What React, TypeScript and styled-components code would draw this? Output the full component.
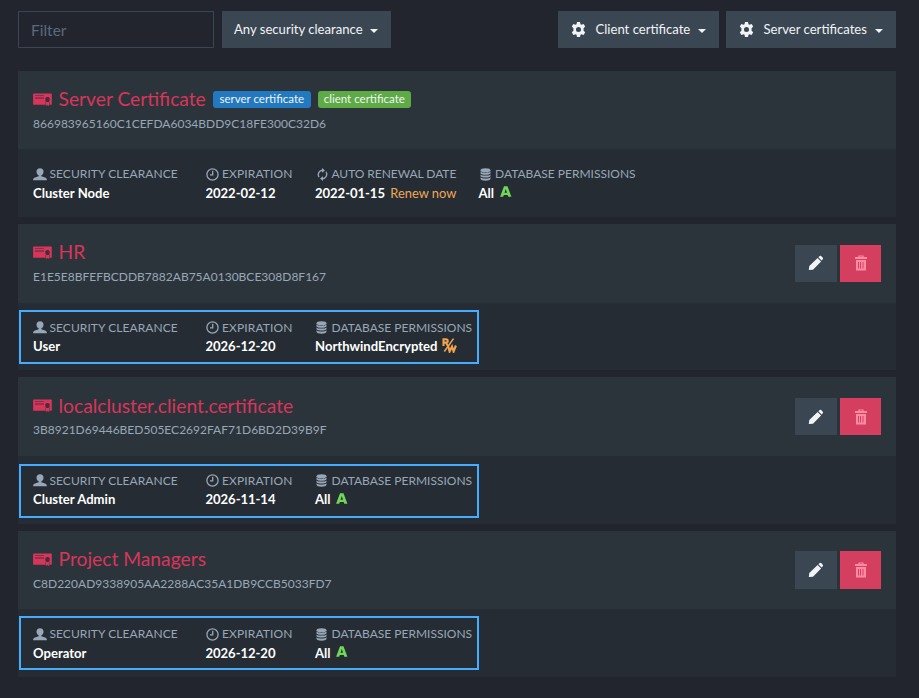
import React from "react";
import styled, { createGlobalStyle } from "styled-components";

const GlobalStyle = createGlobalStyle`
  *, *::before, *::after { box-sizing: border-box; }
  body {
    margin: 0;
    background: #22252d;
    color: #f0f4f6;
    font-family: Lato, "Open Sans", sans-serif;
    font-size: 13px;
  }
`;

const Page = styled.main`
  width: 919px;
  height: 698px;
  padding: 11px 23px 0 18px;
  overflow: hidden;
`;

const Toolbar = styled.div`
  display: flex;
  height: 37px;
  margin-bottom: 22.9px;
`;

const FilterInput = styled.input`
  width: 196px;
  height: 37px;
  margin-right: 8px;
  padding: 0 12px;
  border: 1px solid #3b4653;
  border-radius: 0;
  background: transparent;
  outline: none;
  color: #f0f4f6;
  font: 15.5px Lato, sans-serif;
  &::placeholder { color: #5d6980; opacity: 1; }
`;

const DropButton = styled.button<{ $width: number; $push?: boolean }>`
  display: flex;
  align-items: center;
  width: ${(p) => p.$width}px;
  height: 37px;
  margin-left: ${(p) => (p.$push ? "auto" : "0")};
  padding: 0 12px;
  border: 0;
  background: #3b4653;
  color: #f0f4f6;
  font: 13.1px Lato, sans-serif;
  white-space: nowrap;
  & + & { margin-right: 7px; }
  &:last-child { margin-right: 0; }
  svg { margin: 0 9.5px 0 1px; }
`;

const ButtonText = styled.span`
  margin-top: -2px;
`;

const Caret = styled.span`
  margin: 2px 1px 0 auto;
  border: 4px solid transparent;
  border-top-color: #f0f4f6;
  border-bottom: 0;
`;

const Card = styled.section`
  position: relative;
  height: 146.25px;
  margin-bottom: 7px;
  background: #252c33;
`;

const CardHeader = styled.header`
  display: flex;
  justify-content: space-between;
  height: 78.4px;
  padding: 15px 15px 0;
  background: #2c343b;
`;

const TitleRow = styled.div`
  display: flex;
  align-items: center;
  height: 26px;
  color: #d9345a;
  > svg { margin-top: 0.8px; }
`;

const Title = styled.h3`
  margin: 0.4px 7px 0 6.5px;
  font-size: 19.25px;
  font-weight: 400;
  line-height: 26px;
`;

const Badge = styled.span<{ $color: string; $width: number }>`
  width: ${(p) => p.$width}px;
  height: 17px;
  margin: 1px 7px 0 0;
  border-radius: 3px;
  background: ${(p) => p.$color};
  color: #f0f4f6;
  font-size: 11.5px;
  line-height: 16px;
  text-align: center;
  white-space: nowrap;
`;

const Thumbprint = styled.div`
  margin-top: 2.9px;
  color: #98a7b7;
  font-size: 12px;
  line-height: 18px;
  letter-spacing: 0.01px;
`;

const Actions = styled.div`
  display: flex;
  gap: 3px;
  margin-top: 5.7px;
`;

const ActionButton = styled.button<{ $danger?: boolean }>`
  display: flex;
  align-items: center;
  justify-content: center;
  width: ${(p) => (p.$danger ? 41 : 42)}px;
  height: 37.3px;
  padding: 0;
  border: ${(p) => (p.$danger ? "1px solid #dc3c60" : "0")};
  background: ${(p) => (p.$danger ? "#d43f5f" : "#3b4653")};
  color: ${(p) => (p.$danger ? "#ff8ba3" : "#f0f4f6")};
`;

const Details = styled.div`
  display: flex;
  padding: 16px 15px 0;
`;

const Property = styled.div<{ $width: number }>`
  flex: none;
  width: ${(p) => p.$width}px;
`;

const Label = styled.div<{ $spacing?: number }>`
  display: flex;
  align-items: center;
  height: 18px;
  color: #98a7b7;
  font-size: 12px;
  line-height: 18px;
  letter-spacing: ${(p) => p.$spacing ?? 0.06}px;
  white-space: nowrap;
`;

const IconSlot = styled.span`
  display: flex;
  flex: none;
  align-items: center;
  justify-content: center;
  width: 14px;
  height: 14px;
  margin-right: 2.5px;
`;

const Value = styled.div`
  display: flex;
  align-items: center;
  height: 20px;
  color: #ffffff;
  font-size: 13.1px;
  font-weight: 700;
  line-height: 19px;
  white-space: nowrap;
`;

const DateText = styled.span`
  letter-spacing: -0.06px;
`;

const Renew = styled.a`
  margin-left: 5.3px;
  color: #f0a858;
  font-size: 12.9px;
  font-weight: 400;
`;

const Highlight = styled.div<{ $top: number }>`
  position: absolute;
  top: ${(p) => p.$top}px;
  left: 1px;
  width: 460px;
  height: 54px;
  border: 2px solid #45adff;
  pointer-events: none;
`;

const AccessIcon = styled.svg<{ $gap: number }>`
  margin: -3px 0 0 ${(p) => p.$gap}px;
`;

const GearIcon = () => (
  <svg width="15" height="15" viewBox="0 0 16 16" fill="currentColor">
    <path fillRule="evenodd" d="M6.4 0h3.2l.5 2.3 1.1.6 2.3-.7 1.6 2.7-1.7 1.7v2.7l1.7 1.7-1.6 2.8-2.3-.7-1.1.6L9.6 16H6.4l-.5-2.3-1.1-.6-2.3.7L.9 11l1.7-1.7V6.6L.9 4.9l1.6-2.7 2.3.7 1.1-.6zM8 5.300a2.700 2.700 0 1 0 0 5.400 2.700 2.700 0 0 0 0-5.400z" />
  </svg>
);

const CertificateIcon = () => (
  <svg width="19" height="13" viewBox="0 0 19 13">
    <path fill="#d9345a" d="M1 .5h17q.8 0 .8.8v9.6q0 .9-.8.9H1q-.9 0-.9-.9V1.3Q.1.5 1 .5z" />
    <path stroke="#7f344b" strokeWidth="1" d="M2 2.500h9" />
    <path stroke="#4a3040" strokeWidth="1" d="M2 5h9" />
    <path fill="#3f303c" d="M13.600 4.100h1.800l1.200 1.200v2.600l-1 1.200h-2.200l-1-1.200V5.300z" />
    <path stroke="#7f344b" strokeWidth=".8" d="M12.700 9v3.500M16.500 9v3.500" />
    <path fill="#d9345a" d="M13.300 9.500H16V13l-1.300-.9-1.400.9z" />
  </svg>
);

const UserIcon = () => (
  <svg width="14" height="13" viewBox="0 0 14 13" fill="currentColor">
    <circle cx="7" cy="3.7" r="3.5" />
    <path d="M5.600 6.500h2.800v1.800l4.300 1.500c.8.4 1.200 1.200 1.200 2.400H.1c0-1.200.4-2 1.200-2.400l4.300-1.500z" />
  </svg>
);

const ClockIcon = () => (
  <svg width="13" height="13" viewBox="0 0 13 13" fill="none" stroke="currentColor" strokeWidth="1.3">
    <circle cx="6.5" cy="6.5" r="5.6" />
    <path d="M6.7 2.8v4H4" />
  </svg>
);

const RenewIcon = () => (
  <svg width="13" height="13" viewBox="0 0 13 13" fill="none" stroke="currentColor" strokeWidth="1.4">
    <path d="M3 9.2A4.4 4.4 0 0 1 6.500 2.300M10 3.800a4.400 4.400 0 0 1-3.500 6.900" />
    <path fill="currentColor" stroke="none" d="M6 0l3 2.400-3 2.400zM7 8.200v4.800l-3-2.400z" />
  </svg>
);

const DatabaseIcon = () => (
  <svg width="12" height="13" viewBox="0 0 12 13" fill="currentColor">
    <ellipse cx="5.5" cy="2.2" rx="5" ry="2" />
    <path d="M.5 3.500c1 1.600 9 1.600 10 0v1.900c-1 1.700-9 1.700-10 0zM.5 6.400c1 1.600 9 1.600 10 0v1.900c-1 1.700-9 1.700-10 0zM.5 9.300c1 1.600 9 1.600 10 0v1.500c0 2.500-10 2.500-10 0z" />
  </svg>
);

const PencilIcon = () => (
  <svg width="16" height="16" viewBox="0 0 16 16" fill="currentColor">
    <path d="M.8 15l.5-4 8.300-8 3.500 3.400L5 14.700zM10.400 2.300l1.300-1.200q.7-.6 1.400 0l1.700 1.700q.6.7 0 1.400l-1.200 1.300z" />
  </svg>
);

const TrashIcon = () => (
  <svg width="12" height="16" viewBox="0 0 12 16" fill="none" stroke="currentColor">
    <path strokeWidth="1.2" d="M4 2.500V1h4v1.500" />
    <path strokeWidth="2" d="M0 3h12" />
    <path strokeWidth="2" d="M2 6v8.500h8V6z" />
    <path strokeWidth="1" d="M4.500 6v8M6.500 6v8M8 6v8" />
  </svg>
);

const AdminAccess = () => (
  <AccessIcon $gap={5.5} width="12" height="11" viewBox="0 0 12 11">
    <path fill="#72d757" fillRule="evenodd" d="M4 .3h3.500l3.900 10.400H8.300l-.6-1.800H3.800l-.6 1.800H.1zM5.800 3L4.500 6.800H7z" />
  </AccessIcon>
);

const ReadWriteAccess = () => (
  <AccessIcon $gap={4} width="15" height="15" viewBox="0 0 15 15">
    <g fill="none" stroke="#f0a450">
      <path strokeWidth="2.1" d="M1.500 8V1.300h2.300c2.600 0 2.600 3.300 0 3.300H2.200M3.800 4.500L6 8" />
      <path strokeWidth="1.6" d="M11.500.6L2.300 13.500" />
      <path strokeWidth="2.1" d="M6 7.500l1.600 6 2.400-5 1.600 5 2.300-6" />
    </g>
  </AccessIcon>
);

type Certificate = {
  name: string;
  thumbprint: string;
  clearance: string;
  expiration: string;
  renewal?: string;
  database: string;
  readWrite?: boolean;
  highlightTop?: number;
};

const certificates: Certificate[] = [
  { name: "Server Certificate", thumbprint: "866983965160C1CEFDA6034BDD9C18FE300C32D6", clearance: "Cluster Node", expiration: "2022-02-12", renewal: "2022-01-15", database: "All" },
  { name: "HR", thumbprint: "E1E5E8BFEFBCDDB7882AB75A0130BCE308D8F167", clearance: "User", expiration: "2026-12-20", database: "NorthwindEncrypted", readWrite: true, highlightTop: 85.85 },
  { name: "localcluster.client.certificate", thumbprint: "3B8921D69446BED505EC2692FAF71D6BD2D39B9F", clearance: "Cluster Admin", expiration: "2026-11-14", database: "All", highlightTop: 86.6 },
  { name: "Project Managers", thumbprint: "C8D220AD9338905AA2288AC35A1DB9CCB5033FD7", clearance: "Operator", expiration: "2026-12-20", database: "All", highlightTop: 85.35 },
];

const CertificateCard = ({ cert }: { cert: Certificate }) => (
  <Card>
    <CardHeader>
      <div>
        <TitleRow>
          <CertificateIcon />
          <Title>{cert.name}</Title>
          {cert.renewal && (
            <>
              <Badge $color="#2379bf" $width={98}>server certificate</Badge>
              <Badge $color="#5eaa45" $width={93}>client certificate</Badge>
            </>
          )}
        </TitleRow>
        <Thumbprint>{cert.thumbprint}</Thumbprint>
      </div>
      {!cert.renewal && (
        <Actions>
          <ActionButton aria-label="Edit"><PencilIcon /></ActionButton>
          <ActionButton $danger aria-label="Delete"><TrashIcon /></ActionButton>
        </Actions>
      )}
    </CardHeader>
    <Details>
      <Property $width={172.5}>
        <Label><IconSlot><UserIcon /></IconSlot>SECURITY CLEARANCE</Label>
        <Value>{cert.clearance}</Value>
      </Property>
      <Property $width={109.5}>
        <Label $spacing={0.12}><IconSlot><ClockIcon /></IconSlot>EXPIRATION</Label>
        <Value><DateText>{cert.expiration}</DateText></Value>
      </Property>
      {cert.renewal && (
        <Property $width={163.5}>
          <Label $spacing={-0.06}><IconSlot><RenewIcon /></IconSlot>AUTO RENEWAL DATE</Label>
          <Value><DateText>{cert.renewal}</DateText><Renew>Renew now</Renew></Value>
        </Property>
      )}
      <Property $width={165}>
        <Label $spacing={0}><IconSlot><DatabaseIcon /></IconSlot>DATABASE PERMISSIONS</Label>
        <Value>{cert.database}{cert.readWrite ? <ReadWriteAccess /> : <AdminAccess />}</Value>
      </Property>
    </Details>
    {cert.highlightTop !== undefined && <Highlight $top={cert.highlightTop} />}
  </Card>
);

export default function App() {
  return (
    <>
      <GlobalStyle />
      <Page>
        <Toolbar>
          <FilterInput placeholder="Filter" />
          <DropButton $width={169}><ButtonText>Any security clearance</ButtonText><Caret /></DropButton>
          <DropButton $width={161} $push><GearIcon /><ButtonText>Client certificate</ButtonText><Caret /></DropButton>
          <DropButton $width={170}><GearIcon /><ButtonText>Server certificates</ButtonText><Caret /></DropButton>
        </Toolbar>
        {certificates.map((cert) => <CertificateCard key={cert.name} cert={cert} />)}
      </Page>
    </>
  );
}
